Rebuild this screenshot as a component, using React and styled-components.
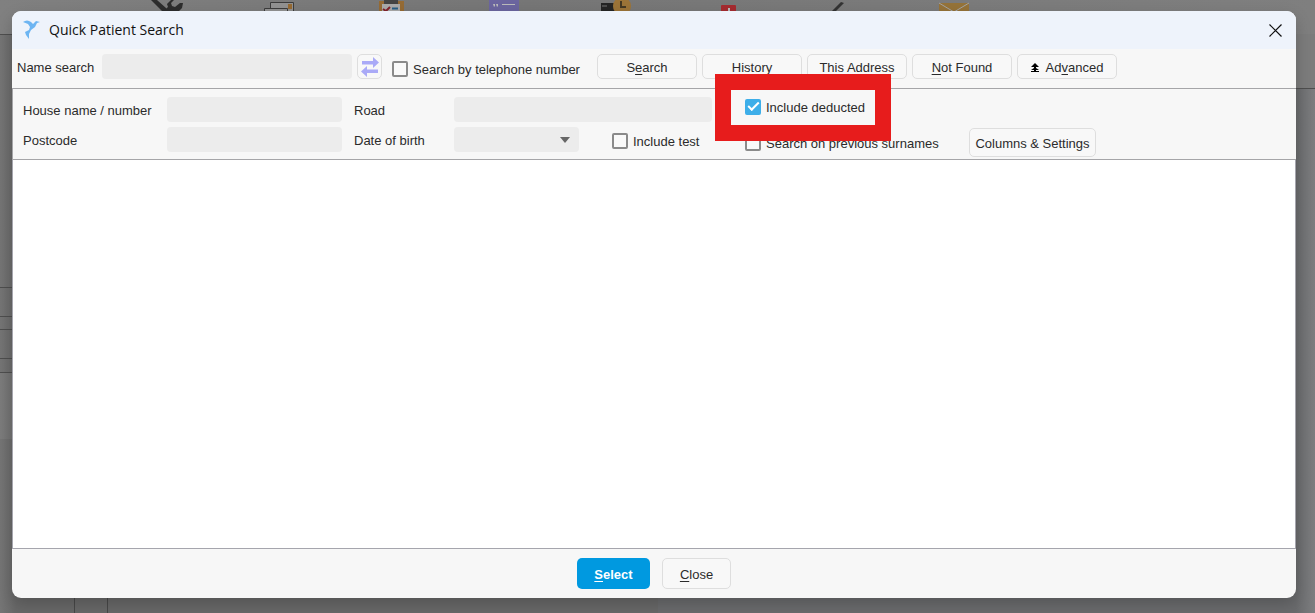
import React from "react";
import styled, { createGlobalStyle } from "styled-components";

const GlobalStyle = createGlobalStyle`
  *, *::before, *::after { box-sizing: border-box; }
  html, body, #root { height: 100%; }
  body {
    margin: 0;
    overflow: hidden;
    font-family: "Liberation Sans", Arial, sans-serif;
    font-size: 13px;
    line-height: 16px;
    color: #2b2b2b;
    background: #6c6c6c;
  }
`;

const Screen = styled.div`
  position: relative;
  height: 100%;
  padding: 11px 19px 15px 12px;
  display: flex;
`;

const Backdrop = styled.div`
  position: absolute;
  inset: 0;
  display: flex;
  flex-direction: column;
  background: #68696b;
`;

const BackToolbar = styled.div`
  display: flex;
  flex: none;
  height: 34px;
  padding-left: 144px;
  background: linear-gradient(90deg, #808080, #767676 40%, #7f7f7f);
`;

const BackIcon = styled.svg`
  flex: none;
  width: 112px;
  height: 11px;
`;

const BackBody = styled.div`
  flex: 1;
  display: grid;
  grid-template-columns: 1fr 1fr;
`;

const BackPane = styled.div`
  display: flex;
  flex-direction: column;
  background: ${(p) => p.$tone};
`;

const BackSection = styled.div`
  flex: none;
  height: ${(p) => p.$height}px;
  border-bottom: ${(p) => (p.$line ? "1px solid #4e4e4e" : "0")};
  background: ${(p) => p.$tone || "transparent"};
`;

const BackColumns = styled.div`
  flex: 1;
  display: grid;
  grid-template-columns: 74px 33px 1fr;
  div + div { border-left: 1px solid #484848; }
`;

const Dialog = styled.section`
  position: relative;
  flex: 1;
  min-width: 0;
  display: flex;
  flex-direction: column;
  overflow: hidden;
  border-radius: 9px;
  background: #f7f7f7;
  box-shadow: 0 6px 16px rgba(0, 0, 0, 0.2);
`;

const TitleBar = styled.header`
  display: flex;
  align-items: center;
  flex: none;
  height: 38px;
  padding: 0 12px 0 10px;
  gap: 8px;
  background: #eef3fb;
`;

const Title = styled.h1`
  flex: 1;
  margin: 0;
  font: 400 14px/20px "Open Sans", "Noto Sans", sans-serif;
  color: #111;
`;

const IconButton = styled.button`
  display: grid;
  place-items: center;
  width: 18px;
  height: 18px;
  padding: 0;
  border: 0;
  background: none;
`;

const SearchBar = styled.div`
  display: flex;
  align-items: center;
  flex: none;
  height: 39px;
  padding: 0 5px 4px;
  gap: 5px;
`;

const NameLabel = styled.label`
  flex: none;
  width: 80px;
  padding-top: 3px;
  white-space: nowrap;
`;

const Field = styled.input`
  width: ${(p) => p.$width || "100%"};
  min-width: 0;
  height: 25px;
  padding: 0 6px;
  border: 0;
  border-radius: 4px;
  background: #ececec;
  font: inherit;
`;

const Button = styled.button`
  flex: none;
  display: inline-flex;
  align-items: center;
  justify-content: center;
  gap: 7px;
  width: ${(p) => p.$width}px;
  height: ${(p) => p.$height || 25}px;
  padding: ${(p) => (p.$iconOnly ? "0" : "3px 0 0")};
  border: ${(p) => (p.$primary ? "0" : "1px solid #dedede")};
  border-radius: 5px;
  background: ${(p) => (p.$primary ? "#0099e0" : "#f8f8f8")};
  color: ${(p) => (p.$primary ? "#fff" : "#2b2b2b")};
  font: inherit;
  font-weight: ${(p) => (p.$primary ? 700 : 400)};
  white-space: nowrap;
  u { text-underline-offset: 2px; }
`;

const CheckLabel = styled.label`
  position: relative;
  display: flex;
  align-items: center;
  gap: 5px;
  width: max-content;
  white-space: nowrap;
`;

const CheckText = styled.span`
  padding-top: 2px;
`;

const CheckBox = styled.input`
  appearance: none;
  flex: none;
  display: grid;
  place-items: center;
  width: 16px;
  height: 16px;
  margin: 0;
  border: 2px solid #8a8a8a;
  border-radius: 2px;
  background: #f9f9f9;
  &:checked {
    border-color: #3daee9;
    background: #3daee9;
  }
  &:checked::after {
    content: "";
    width: 11px;
    height: 6px;
    margin-bottom: 3px;
    border: solid #fff;
    border-width: 0 0 2px 2px;
    transform: rotate(-45deg);
  }
`;

const TelephoneCheck = styled.div`
  width: 205px;
  padding: 4px 0 0 5px;
`;

const Filters = styled.div`
  flex: none;
  display: grid;
  grid-template-columns: 132px 175px 88px 125px 121px 233px 127px;
  column-gap: 12px;
  grid-template-rows: 25px 25px;
  row-gap: 5px;
  align-items: center;
  height: 72px;
  padding: 8px 10px;
  border: solid #a5a5a8;
  border-width: 1px 0 1px 1px;
`;

const FilterLabel = styled.label`
  padding-top: 3px;
  white-space: nowrap;
`;

const RoadField = styled(Field)`
  grid-column: 4 / 6;
`;

const DateSelect = styled.select`
  appearance: none;
  grid-area: 1 / 1;
  width: 100%;
  height: 25px;
  border: 0;
  border-radius: 4px;
  background: #ececec;
  font: inherit;
`;

const SelectWrap = styled.div`
  display: grid;
  align-items: center;
  svg { grid-area: 1 / 1; justify-self: end; margin-right: 9px; pointer-events: none; }
`;

const TestCell = styled.div`
  padding: 2px 0 0 21px;
`;

const DeductedCell = styled.div`
  padding: 0 0 6px 21px;
`;

const LowerCell = styled.div`
  padding-top: 6px;
  padding-left: ${(p) => p.$indent || 0}px;
`;

const Highlight = styled.span`
  position: absolute;
  z-index: 2;
  inset: -24px -26px -25px -30px;
  border: 16px solid #e71c1c;
  pointer-events: none;
`;

const Results = styled.main`
  flex: 1;
  min-height: 0;
  border: solid #a5a5ad;
  border-width: 0 1px 1px 1px;
  background: #fff;
`;

const Footer = styled.footer`
  flex: none;
  display: flex;
  justify-content: center;
  gap: 12px;
  height: 49px;
  padding-top: 9px;
`;

const toolbarIcons = [
  <g key="tools" fill="#2d2d2d"><path d="M7 0h6l9 8v3h-4z" /><path d="M19 11l5-4-1-3 4-4h3l-3 3 1 3 3 1 5-4h3l-1 5-3 3h-6l-2 1z" /></g>,
  <g key="cards" fill="#929292" stroke="#3c3c3c"><path d="M14.500 2.500h23v10h-23z" /><path d="M8.500 8.500h23v6h-23z" /><path d="M32 4h4v5h-4z" fill="#966a32" stroke="none" /></g>,
  <g key="tasks"><path d="M11 1h25v12H11z" fill="#956b35" /><path d="M14 4h18v8H14z" fill="#aaa" /><path d="M16 0h14v4H16z" fill="#444" /><path d="M15 9l3 2 4-4" stroke="#82222c" strokeWidth="2" fill="none" /><path d="M24 8.500h6" stroke="#285e85" strokeWidth="2" /></g>,
  <g key="quote"><path d="M9 0h30v11H9z" fill="#6b659f" /><path d="M13 4h2v2l-1 1zm3 0h2v2l-1 1zM22 4h13v1H22z" fill="#bbb" /></g>,
  <g key="clock"><path d="M9 3h14v8H9z" fill="#252525" /><path d="M10 6h5" stroke="#777" /><circle cx="30" cy="6" r="9" fill="#9c7438" /><path d="M29 1v6h5" fill="none" stroke="#463923" strokeWidth="2" /></g>,
  <g key="medical"><path d="M17 6q0-1 1-1h13q1 0 1 1v6H17z" fill="#a52b30" /><path d="M24 8h2v4h-2z" fill="#bbb" /></g>,
  <g key="pen"><path d="M16 11l9-9 3 1-8 8z" fill="#333" /></g>,
  <g key="mail"><path d="M11 3h30v9H11z" fill="#957339" /><path d="M11 3l15 9 15-9" fill="none" stroke="#a3a3a3" /></g>,
];

function Check({ children, highlighted, ...rest }) {
  return (
    <CheckLabel>
      <CheckBox type="checkbox" {...rest} />
      <CheckText>{children}</CheckText>
      {highlighted && <Highlight />}
    </CheckLabel>
  );
}

export default function App() {
  return (
    <Screen>
      <GlobalStyle />
      <Backdrop aria-hidden="true">
        <BackToolbar>
          {toolbarIcons.map((icon, i) => <BackIcon key={i}>{icon}</BackIcon>)}
        </BackToolbar>
        <BackBody>
          <BackPane $tone="linear-gradient(90deg, #757575, #686868 16px)">
            <BackSection $height={1} $line />
            <BackSection $height={253} $line />
            <BackSection $height={29} $line />
            <BackSection $height={13} $line />
            <BackSection $height={29} $line />
            <BackSection $height={14} $line />
            <BackSection $height={66} $tone="rgba(255,255,255,.05)" />
            <BackColumns><div /><div /><div /></BackColumns>
          </BackPane>
          <BackPane $tone="linear-gradient(270deg, #7c7d7f, #6a6b6d 19px)">
            <BackSection $height={55} $line $tone="#7c7c7c" />
          </BackPane>
        </BackBody>
      </Backdrop>
      <Dialog role="dialog" aria-labelledby="dialog-title">
        <TitleBar>
          <svg width="19" height="20" viewBox="0 0 19 20" fill="#6db5f2">
            <path d="M1 2Q5-1 9 2l2 2 3-3 4 1-3 1-2 4-4 3-2 4 0 5-3-4-1-3 4-2 1-3-2-3z" />
          </svg>
          <Title id="dialog-title">Quick Patient Search</Title>
          <IconButton aria-label="Close dialog">
            <svg width="13" height="13" viewBox="0 0 13 13" stroke="#111" strokeWidth="1.200"><path d="M.5.5l12 12M12.500.5l-12 12" /></svg>
          </IconButton>
        </TitleBar>
        <SearchBar>
          <NameLabel htmlFor="name">Name search</NameLabel>
          <Field id="name" $width="250px" />
          <Button $width={25} $iconOnly aria-label="Swap names">
            <svg width="18" height="20" viewBox="0 0 18 20" fill="#aaaaf7"><path d="M1 4h11V0l6 5.500-6 5.500V7.500H1zM17 12.500H6V9L0 14.500 6 20v-4h11z" /></svg>
          </Button>
          <TelephoneCheck><Check>Search by telephone number</Check></TelephoneCheck>
          <Button $width={100}><span>S<u>e</u>arch</span></Button>
          <Button $width={100}>History</Button>
          <Button $width={100}>This Address</Button>
          <Button $width={100}><span><u>N</u>ot Found</span></Button>
          <Button $width={100}>
            <svg width="8" height="10" viewBox="0 0 8 10" fill="#000"><path d="M4 0l4 4H5v1l3 2H5v1h3v1H0V8h3V7H0l3-2V4H0z" /></svg>
            <span>Ad<u>v</u>anced</span>
          </Button>
        </SearchBar>
        <Filters>
          <FilterLabel htmlFor="house">House name / number</FilterLabel>
          <Field id="house" />
          <FilterLabel htmlFor="road">Road</FilterLabel>
          <RoadField id="road" />
          <DeductedCell><Check defaultChecked highlighted>Include deducted</Check></DeductedCell>
          <span />
          <FilterLabel htmlFor="postcode">Postcode</FilterLabel>
          <Field id="postcode" />
          <FilterLabel htmlFor="dob">Date of birth</FilterLabel>
          <SelectWrap>
            <DateSelect id="dob" />
            <svg width="10" height="6" viewBox="0 0 10 6" fill="#666"><path d="M0 0h10L5 6z" /></svg>
          </SelectWrap>
          <TestCell><Check>Include test</Check></TestCell>
          <LowerCell $indent={21}><Check>Search on previous surnames</Check></LowerCell>
          <LowerCell><Button $width={127} $height={29}>Columns &amp; Settings</Button></LowerCell>
        </Filters>
        <Results />
        <Footer>
          <Button $primary $width={73} $height={31}><span><u>S</u>elect</span></Button>
          <Button $width={69} $height={31}><span><u>C</u>lose</span></Button>
        </Footer>
      </Dialog>
    </Screen>
  );
}
